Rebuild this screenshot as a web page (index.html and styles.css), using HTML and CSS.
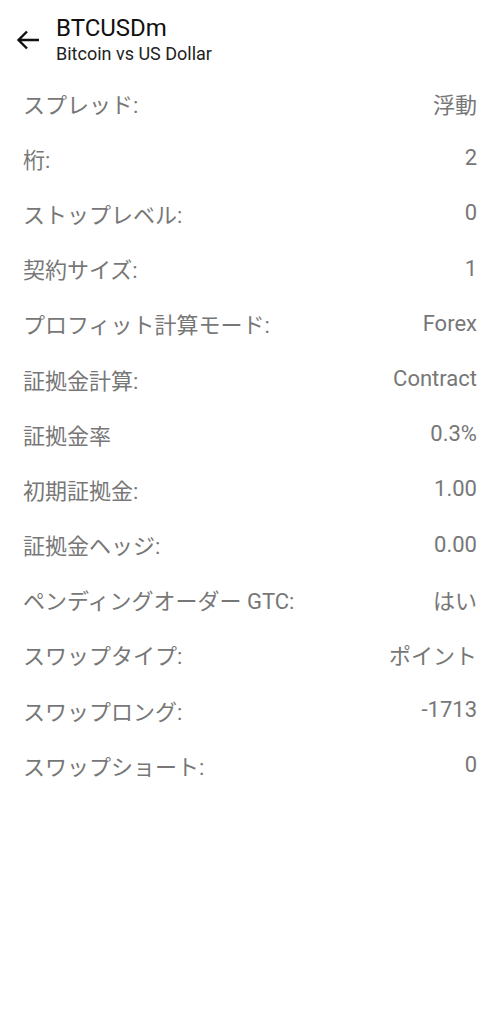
FILE: index.html
```html
<!DOCTYPE html>
<html lang="ja">
<head>
    <meta charset="UTF-8">
    <meta name="viewport" content="width=device-width, initial-scale=1.0">
    <title>BTCUSDm</title>
    <link rel="stylesheet" href="styles.css">
</head>
<body>
    <header class="toolbar">
        <svg class="back" width="24" height="20" viewBox="0 0 24 20">
            <path d="M23 10H2.5M11 1.5L2.5 10l8.5 8.5" fill="none" stroke="#111" stroke-width="2.4"/>
        </svg>
        <div class="titles">
            <div class="title">BTCUSDm</div>
            <div class="subtitle">Bitcoin vs US Dollar</div>
        </div>
    </header>

    <div class="specs">
        <div class="row"><span>スプレッド:</span><span>浮動</span></div>
        <div class="row"><span>桁:</span><span>2</span></div>
        <div class="row"><span>ストップレベル:</span><span>0</span></div>
        <div class="row"><span>契約サイズ:</span><span>1</span></div>
        <div class="row"><span>プロフィット計算モード:</span><span>Forex</span></div>
        <div class="row"><span>証拠金計算:</span><span>Contract</span></div>
        <div class="row"><span>証拠金率</span><span>0.3%</span></div>
        <div class="row"><span>初期証拠金:</span><span>1.00</span></div>
        <div class="row"><span>証拠金ヘッジ:</span><span>0.00</span></div>
        <div class="row"><span>ペンディングオーダー GTC:</span><span>はい</span></div>
        <div class="row"><span>スワップタイプ:</span><span>ポイント</span></div>
        <div class="row"><span>スワップロング:</span><span>-1713</span></div>
        <div class="row"><span>スワップショート:</span><span>0</span></div>
    </div>
</body>
</html>
```

FILE: styles.css
```css
body {
    margin: 0;
    background: #ffffff;
    font-family: Roboto, "Noto Sans CJK JP", sans-serif;
}

.toolbar {
    display: flex;
    align-items: center;
    height: 76px;
    padding: 3px 0 0 16px;
    box-sizing: border-box;
}

.back {
    margin-right: 16px;
}

.title {
    font-size: 24px;
    line-height: 28px;
    color: #111111;
}

.subtitle {
    font-size: 18px;
    line-height: 24px;
    color: #222222;
}

.specs {
    padding: 0 23px;
    margin-top: -1px;
}

.row {
    display: flex;
    justify-content: space-between;
    align-items: center;
    height: 55.2px;
    font-size: 22px;
    color: #777777;
}
```
